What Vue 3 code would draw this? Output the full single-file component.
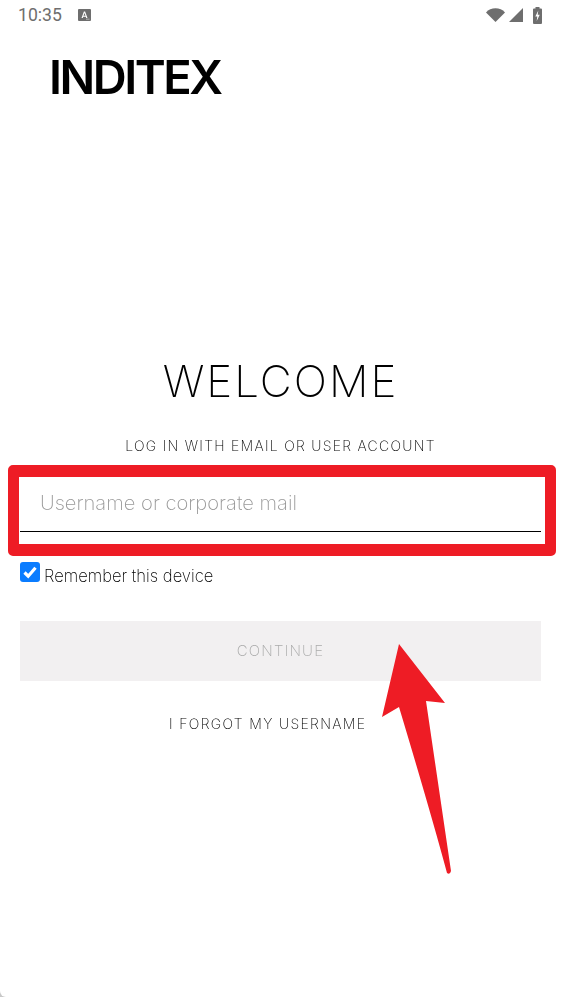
<script setup>
import { ref } from 'vue'

const username = ref('')
const remember = ref(true)
</script>

<template>
  <div class="page">
    <div class="status-bar">
      <div class="status-left">
        <span class="clock">10:35</span>
        <svg class="notif" width="13" height="12" viewBox="0 0 13 12">
          <rect width="13" height="12" rx="1" fill="#6e6e6e" />
          <path d="M3.500 9 5.900 2.600h1.200L9.500 9H8.200l-.4-1.300H5.200L4.800 9zM5.500 6.700h2L6.500 3.900z" fill="#fff" />
          <rect x="8" y="9.600" width="3.500" height="1.200" fill="#a8a8a8" />
        </svg>
      </div>
      <div class="status-right">
        <svg width="19" height="14" viewBox="0 0 19 14">
          <path d="M0 4.400C2.400 1.800 5.800.3 9.500.3s7.100 1.500 9.500 4.100L9.500 14z" fill="#6e6e6e" />
        </svg>
        <svg class="signal" width="14" height="14" viewBox="0 0 14 14">
          <path d="M14 0v14H0z" fill="#6e6e6e" />
        </svg>
        <svg class="battery" width="9" height="17" viewBox="0 0 9 17">
          <path d="M2.500 0h4v1.500h1.500a1 1 0 0 1 1 1V16a1 1 0 0 1-1 1H1a1 1 0 0 1-1-1V2.500a1 1 0 0 1 1-1h1.500z" fill="#6e6e6e" />
          <path d="M5.300 3.500 2.300 9.500h2L3.700 14l3-6.200h-2z" fill="#fff" />
        </svg>
      </div>
    </div>

    <div class="logo">INDITEX</div>

    <main class="login">
      <h1 class="title">WELCOME</h1>
      <p class="subtitle">LOG IN WITH EMAIL OR USER ACCOUNT</p>

      <div class="field">
        <input v-model="username" class="field-input" placeholder="Username or corporate mail" />
        <div class="highlight"></div>
      </div>

      <label class="remember">
        <input v-model="remember" class="remember-input" type="checkbox" />
        <span class="checkbox">
          <svg v-if="remember" width="14" height="13" viewBox="0 0 14 13">
            <path d="M1.500 6.500 5.200 10.200 12.500 1.800" fill="none" stroke="#fff" stroke-width="3.200" />
          </svg>
        </span>
        <span class="remember-text">Remember this device</span>
      </label>

      <button class="continue" type="button" disabled>CONTINUE</button>
      <a class="forgot">I FORGOT MY USERNAME</a>
    </main>

    <svg class="arrow" width="561" height="997" viewBox="0 0 561 997">
      <path
        d="M399 644 445 703 426 701 451 871Q450 875 447 873 430 810 399 707L382 717z"
        fill="#ee1c25"
      />
    </svg>
  </div>
</template>

<style>
body {
  background: #c8c8c8;
}
</style>

<style scoped>
.page {
  position: relative;
  width: 561px;
  height: 997px;
  overflow: hidden;
  background: #fff;
  border-bottom-left-radius: 6px;
  font-family: Inter, "Liberation Sans", sans-serif;
  color: #000;
}

.status-bar {
  display: flex;
  align-items: center;
  justify-content: space-between;
  height: 30px;
  padding: 0 19px 0 18px;
  color: #6e6e6e;
}

.status-left {
  display: flex;
  align-items: center;
  gap: 16px;
}

.clock {
  font-family: Roboto, sans-serif;
  font-size: 17.600px;
}

.status-right {
  display: flex;
  align-items: center;
}

.signal {
  margin-left: 4px;
}

.battery {
  margin-left: 10px;
}

.logo {
  margin: 24px 0 0 49px;
  font-size: 47px;
  line-height: 46px;
  font-weight: 600;
  letter-spacing: -2.500px;
  color: #000;
  will-change: transform;
}

.login {
  display: flex;
  flex-direction: column;
  padding: 0 20px;
  margin-top: 253px;
  will-change: transform;
}

.title {
  margin: 0;
  font-size: 44px;
  line-height: 56px;
  font-weight: 200;
  letter-spacing: 2px;
  text-align: center;
  color: #000;
}

.subtitle {
  margin: 28px 0 0;
  font-size: 14px;
  line-height: 18px;
  font-weight: 250;
  letter-spacing: 1.280px;
  text-align: center;
}

.field {
  position: relative;
  margin-top: 13px;
  height: 64px;
}

.field-input {
  box-sizing: border-box;
  display: block;
  width: 100%;
  height: 64px;
  padding: 6px 20px 0;
  border: none;
  border-bottom: 1px solid #000;
  outline: none;
  background: transparent;
  font-family: inherit;
  font-size: 20.200px;
  font-weight: 250;
}

.field-input::placeholder {
  color: #999;
  opacity: 1;
}

.highlight {
  position: absolute;
  inset: -3px -15px -24px -12px;
  border-style: solid;
  border-color: #ee1c25;
  border-width: 12px 11px;
  border-radius: 5px;
  pointer-events: none;
}

.remember {
  display: flex;
  align-items: flex-start;
  gap: 4px;
  height: 20px;
  margin-top: 30px;
  font-size: 16.600px;
  font-weight: 250;
}

.remember-input {
  position: absolute;
  opacity: 0;
  width: 0;
  height: 0;
}

.checkbox {
  display: flex;
  align-items: center;
  justify-content: center;
  width: 20px;
  height: 20px;
  border-radius: 3px;
  background: #0a7cff;
}

.remember-text {
  line-height: 28px;
}

.continue {
  height: 60px;
  margin-top: 39px;
  padding: 0 0 2px;
  border: none;
  background: #f2f0f1;
  color: #aaa;
  font-family: inherit;
  font-size: 15px;
  font-weight: 250;
  letter-spacing: 1.150px;
}

.forgot {
  margin-top: 34px;
  margin-left: 149px;
  font-size: 14px;
  line-height: 18px;
  font-weight: 250;
  letter-spacing: 1.350px;
}

.arrow {
  position: absolute;
  top: 0;
  left: 0;
  pointer-events: none;
}
</style>
